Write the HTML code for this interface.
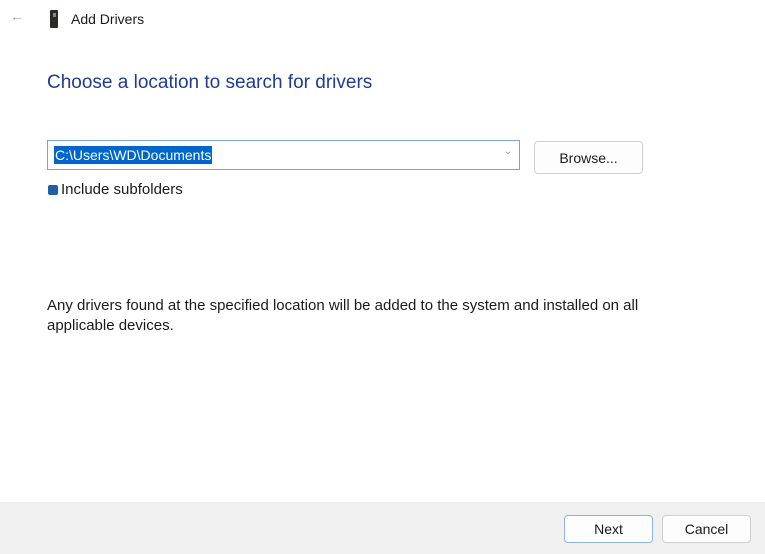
<!DOCTYPE html>
<html><head><style>
body{margin:0;width:765px;height:554px;background:#fff;font-family:"Liberation Sans",sans-serif;position:relative;overflow:hidden;color:#1a1a1a}
div,span{position:absolute;box-sizing:border-box}
.btn{background:#fdfdfd;border:1px solid #d0d0d0;border-radius:4px;font-size:14px;text-align:center;line-height:26px;color:#1a1a1a}
</style></head><body>
<span style="left:10px;top:8px;font-size:14px;color:#aaa">&#8592;</span>
<div style="left:50px;top:10px;width:8px;height:18px;background:#2a2a2a;border-radius:1px"></div>
<div style="left:53px;top:13px;width:3px;height:4px;background:#4caf50"></div>
<span style="left:71px;top:11px;font-size:14px">Add Drivers</span>
<span style="left:47px;top:72px;font-size:19px;color:#1f3c93">Choose a location to search for drivers</span>
<div style="left:47px;top:140px;width:473px;height:30px;border:1px solid #7aa3d3;background:#fff"></div>
<span style="left:54px;top:146px;height:18px;background:#0066cc;color:#fff;font-size:14px;line-height:18px;padding:0 1px">C:\Users\WD\Documents</span>
<span style="left:504px;top:146px;font-size:10px;color:#999">&#8964;</span>
<div class="btn" style="left:534px;top:141px;width:109px;height:33px;line-height:33px">Browse...</div>
<div style="left:48px;top:185px;width:10px;height:10px;background:#1f5fa8;border-radius:2px"></div>
<span style="left:61px;top:181px;font-size:15px">Include subfolders</span>
<span style="left:47px;top:296px;font-size:15px;line-height:20px;width:600px">Any drivers found at the specified location will be added to the system and installed on all applicable devices.</span>
<div style="left:0;top:502px;width:765px;height:52px;background:#f0f0f0"></div>
<div class="btn" style="left:564px;top:515px;width:89px;height:28px;border-color:#8fb4dc">Next</div>
<div class="btn" style="left:662px;top:515px;width:89px;height:28px">Cancel</div>
</body></html>
